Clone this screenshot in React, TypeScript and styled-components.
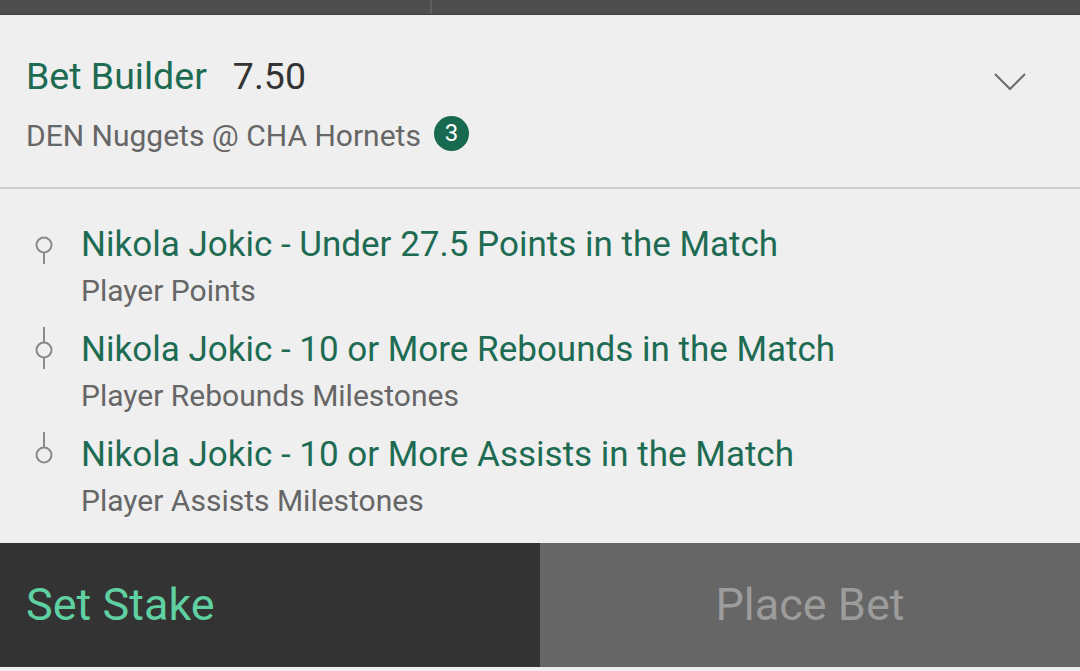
import React, { FC } from "react";
import styled, { createGlobalStyle } from "styled-components";

const GlobalStyle = createGlobalStyle`
  html, body {
    margin: 0;
    padding: 0;
    background: #efefef;
  }
  body {
    font-family: Roboto, "Noto Sans", "Liberation Sans", sans-serif;
  }
`;

interface ISelection {
  title: string;
  market: string;
}

const selections: ISelection[] = [
  { title: "Nikola Jokic - Under 27.5 Points in the Match", market: "Player Points" },
  { title: "Nikola Jokic - 10 or More Rebounds in the Match", market: "Player Rebounds Milestones" },
  { title: "Nikola Jokic - 10 or More Assists in the Match", market: "Player Assists Milestones" },
];

const TimelineDot: FC<{ first: boolean; last: boolean }> = ({ first, last }) => (
  <svg width="36" height="46" viewBox="0 0 36 46">
    {!first && <line x1="18" y1="0" x2="18" y2="15" stroke="#8a8a8a" strokeWidth="2" />}
    <circle cx="18" cy="23" r="7.5" fill="none" stroke="#8a8a8a" strokeWidth="2" />
    {!last && <line x1="18" y1="31" x2="18" y2="42" stroke="#8a8a8a" strokeWidth="2" />}
  </svg>
);

const App: FC = () => {
  return (
    <Page>
      <GlobalStyle />
      <TopBar>
        <TopCell wide />
        <TopCell />
      </TopBar>

      <Header>
        <HeaderText>
          <TitleRow>
            <BuilderTitle>Bet Builder</BuilderTitle>
            <Odds>7.50</Odds>
          </TitleRow>
          <EventRow>
            <EventName>DEN Nuggets @ CHA Hornets</EventName>
            <Badge>3</Badge>
          </EventRow>
        </HeaderText>
        <Chevron width="32" height="18" viewBox="0 0 32 18">
          <polyline points="1,1 16,16 31,1" fill="none" stroke="#6b6b6b" strokeWidth="2" />
        </Chevron>
      </Header>

      <List>
        {selections.map((s, i) => (
          <Item key={s.title}>
            <IconCell>
              <TimelineDot first={i === 0} last={i === selections.length - 1} />
            </IconCell>
            <ItemText>
              <SelectionTitle>{s.title}</SelectionTitle>
              <Market>{s.market}</Market>
            </ItemText>
          </Item>
        ))}
      </List>

      <Footer>
        <FooterButton dark>Set Stake</FooterButton>
        <FooterButton>Place Bet</FooterButton>
      </Footer>
    </Page>
  );
};

const Page = styled.div`
  width: 1080px;
  height: 671px;
  display: flex;
  flex-direction: column;
  background: #efefef;
  overflow: hidden;
`;

const TopBar = styled.div`
  display: flex;
  height: 14px;
  background: #4e4e4e;
  border-bottom: 1px solid #3f3f3f;
`;

const TopCell = styled.div<{ wide?: boolean }>`
  width: ${({ wide }) => (wide ? "430px" : "auto")};
  flex: ${({ wide }) => (wide ? "none" : "1")};
  border-right: ${({ wide }) => (wide ? "2px solid #5d5d5d" : "none")};
`;

const Header = styled.div`
  display: flex;
  align-items: flex-start;
  justify-content: space-between;
  padding: 37px 54px 29px 26px;
  border-bottom: 2px solid #cdcdcd;
`;

const HeaderText = styled.div`
  display: flex;
  flex-direction: column;
`;

const TitleRow = styled.div`
  display: flex;
  align-items: baseline;
  gap: 26px;
  height: 48px;
  line-height: 48px;
`;

const BuilderTitle = styled.span`
  font-size: 37.5px;
  color: #1d6b52;
`;

const Odds = styled.span`
  font-size: 37.5px;
  color: #333333;
`;

const EventRow = styled.div`
  display: flex;
  align-items: center;
  gap: 13px;
  margin-top: 14px;
  height: 44px;
`;

const EventName = styled.span`
  font-size: 30px;
  color: #666666;
  line-height: 44px;
`;

const Badge = styled.span`
  display: flex;
  align-items: center;
  justify-content: center;
  width: 35px;
  height: 35px;
  border-radius: 50%;
  background: #17694f;
  color: #ffffff;
  font-size: 24px;
  margin-bottom: 6px;
`;

const Chevron = styled.svg`
  margin-top: 21px;
`;

const List = styled.div`
  display: flex;
  flex-direction: column;
  padding-top: 23px;
`;

const Item = styled.div`
  display: flex;
  height: 105px;
  padding-left: 26px;
  padding-top: 10px;
  box-sizing: border-box;
`;

const IconCell = styled.div`
  width: 36px;
  margin-right: 19px;
`;

const ItemText = styled.div`
  display: flex;
  flex-direction: column;
`;

const SelectionTitle = styled.div`
  font-size: 35px;
  line-height: 46px;
  color: #1d6b52;
`;

const Market = styled.div`
  font-size: 30px;
  line-height: 46px;
  color: #666666;
`;

const Footer = styled.div`
  display: flex;
  height: 124px;
  margin-top: auto;
  margin-bottom: 4px;
`;

const FooterButton = styled.div<{ dark?: boolean }>`
  width: 540px;
  box-sizing: border-box;
  display: flex;
  align-items: center;
  justify-content: ${({ dark }) => (dark ? "flex-start" : "center")};
  padding-left: ${({ dark }) => (dark ? "26px" : "0")};
  padding-bottom: 2px;
  background: ${({ dark }) => (dark ? "#333333" : "#666666")};
  color: ${({ dark }) => (dark ? "#5fd0a2" : "#9c9c9c")};
  font-size: 45px;
`;

export default App;
